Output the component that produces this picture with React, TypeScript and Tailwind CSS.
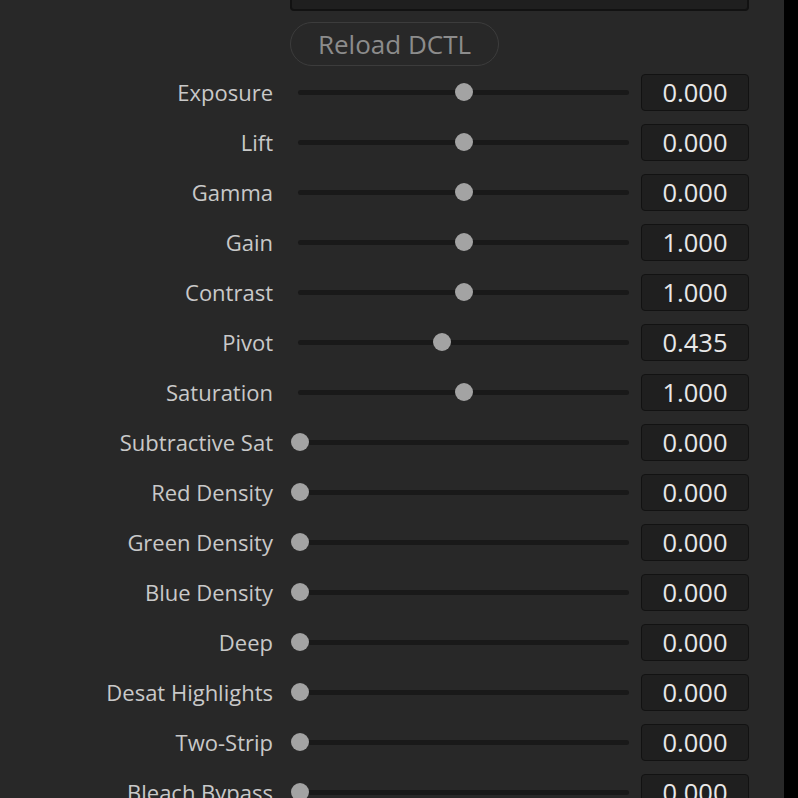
import React from "react";

type Param = { label: string; value: string; pos: number };

const params: Param[] = [
  { label: "Exposure", value: "0.000", pos: 0.5 },
  { label: "Lift", value: "0.000", pos: 0.5 },
  { label: "Gamma", value: "0.000", pos: 0.5 },
  { label: "Gain", value: "1.000", pos: 0.5 },
  { label: "Contrast", value: "1.000", pos: 0.5 },
  { label: "Pivot", value: "0.435", pos: 0.435 },
  { label: "Saturation", value: "1.000", pos: 0.5 },
  { label: "Subtractive Sat", value: "0.000", pos: 0 },
  { label: "Red Density", value: "0.000", pos: 0 },
  { label: "Green Density", value: "0.000", pos: 0 },
  { label: "Blue Density", value: "0.000", pos: 0 },
  { label: "Deep", value: "0.000", pos: 0 },
  { label: "Desat Highlights", value: "0.000", pos: 0 },
  { label: "Two-Strip", value: "0.000", pos: 0 },
  { label: "Bleach Bypass", value: "0.000", pos: 0 },
];

const Slider = ({ pos }: { pos: number }) => (
  <div className="relative h-[18px] w-[331px] flex items-center">
    <div className="h-[5px] w-full rounded-full bg-[#191919]" />
    <div
      className="absolute top-0 h-[18px] w-[18px] -translate-x-1/2 rounded-full bg-[#a3a3a3]"
      style={{ left: `calc(${pos * 100}% + ${pos === 0 ? 2 : 0}px)` }}
    />
  </div>
);

const Row = ({ label, value, pos }: Param) => (
  <div className="flex h-[50px] items-center">
    <div className="w-[274px] pr-[1px] text-right text-[22px] text-[#c9c9c9]">
      {label}
    </div>
    <div className="ml-[24px]">
      <Slider pos={pos} />
    </div>
    <div className="ml-[12px] flex h-[37px] w-[108px] items-center justify-center rounded-[4px] border border-[#121212] bg-[#1f1f1f] text-[25.5px] text-[#e8e8e8]">
      {value}
    </div>
  </div>
);

export default function App() {
  return (
    <div
      className="h-[798px] w-[798px] overflow-hidden bg-black"
      style={{ fontFamily: '"Open Sans", "Noto Sans", sans-serif' }}
    >
      <div className="flex h-full w-[784px] flex-col bg-[#282828]">
        <div className="ml-[290px] -mt-[30px] flex h-[41px] w-[459px] shrink-0 items-center rounded-[4px] border-2 border-[#121212] bg-[#1f1f1f] pl-[22px] text-[25.5px] text-[#e0e0e0]">
          MONO 2.2
        </div>
        <div className="ml-[290px] mt-[11px] flex h-[44px] w-[209px] shrink-0 items-center justify-center rounded-full border border-[#3c3c3c] text-[26px] text-[#8c8c8c]">
          Reload DCTL
        </div>
        <div className="mt-[1px] shrink-0">
          {params.map((p) => (
            <Row key={p.label} {...p} />
          ))}
        </div>
      </div>
    </div>
  );
}
